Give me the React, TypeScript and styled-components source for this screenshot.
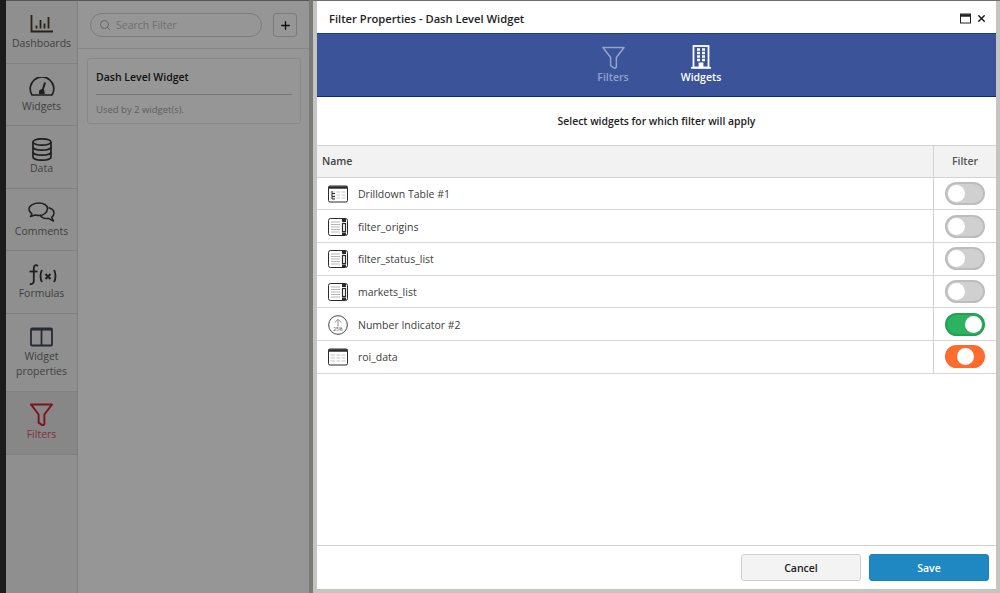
import React from "react";
import styled, { createGlobalStyle } from "styled-components";
import { Search, Plus, X } from "lucide-react";

const GlobalStyle = createGlobalStyle`
  html, body {
    margin: 0;
    padding: 0;
    height: 100%;
    overflow: hidden;
    font-family: "Open Sans", "Noto Sans", sans-serif;
  }
`;

const Page = styled.div`
  width: 1000px;
  height: 593px;
  display: flex;
  background: #969696;
  overflow: hidden;
`;

const EdgeStrip = styled.div`
  width: 6px;
  background: #1c1c1c;
  flex: none;
`;

const Sidebar = styled.nav`
  width: 72px;
  flex: none;
  background: #8f8f8f;
  border-right: 1px solid #7f7f7f;
  box-sizing: border-box;
  border-top: 1px solid #555;
`;

const NavItem = styled.div<{ $active?: boolean; $tall?: boolean }>`
  height: ${(p) => (p.$tall ? 78 : 62.6)}px;
  box-sizing: border-box;
  border-bottom: 1px solid #808080;
  display: flex;
  flex-direction: column;
  align-items: center;
  padding-top: 11px;
  background: ${(p) => (p.$active ? "#878787" : "transparent")};
  color: ${(p) => (p.$active ? "#7d3238" : "#3f3f3f")};
  font-size: 10.5px;
  line-height: 15px;
  text-align: center;
`;

const NavIcon = styled.div`
  height: 24px;
  display: flex;
  align-items: center;
  justify-content: center;
  color: #1f1f1f;
`;

const FilterPanel = styled.section`
  width: 231px;
  flex: none;
  box-sizing: border-box;
  border-top: 1px solid #555;
  background: #969696;
`;

const SearchBar = styled.div`
  height: 48px;
  box-sizing: border-box;
  border-bottom: 1px solid #858585;
  padding: 12px 12px 0 12px;
  display: flex;
  gap: 11px;
`;

const SearchField = styled.div`
  width: 172px;
  flex: none;
  height: 24px;
  box-sizing: border-box;
  border: 1px solid #7c7c7c;
  border-radius: 12px;
  display: flex;
  align-items: center;
  gap: 5px;
  padding-left: 8px;
  color: #6f6f6f;
  font-size: 10.5px;
`;

const AddButton = styled.div`
  width: 24px;
  flex: none;
  height: 24px;
  box-sizing: border-box;
  border: 1px solid #7c7c7c;
  border-radius: 3px;
  display: flex;
  align-items: center;
  justify-content: center;
  color: #111;
`;

const FilterCard = styled.div`
  margin: 9px 8px 8px 9px;
  height: 66px;
  box-sizing: border-box;
  border: 1px solid #888;
  border-radius: 3px;
  padding: 11px 8px 0 8px;
`;

const CardTitle = styled.div`
  font-size: 10.5px;
  font-weight: 600;
  line-height: 15px;
  color: #111;
  padding-bottom: 9px;
  border-bottom: 1px solid #777;
`;

const CardMeta = styled.div`
  font-size: 9.5px;
  line-height: 14px;
  margin-top: 8px;
  color: #5f5f5f;
`;

const ShadowEdge = styled.div`
  width: 4px;
  flex: none;
  background: #7a7a78;
`;

const ModalFrame = styled.div`
  flex: 1;
  box-sizing: border-box;
  background: #c6c4c1;
  border-top: 1px solid #6e6e6e;
  padding: 0 4px 4px 4px;
  display: flex;
`;

const Modal = styled.main`
  flex: 1;
  display: flex;
  flex-direction: column;
  background: #fff;
`;

const ModalHeader = styled.header`
  height: 32px;
  flex: none;
  box-sizing: border-box;
  padding: 2px 9px 0 12px;
  display: flex;
  align-items: center;
  justify-content: space-between;
  font-size: 11.2px;
  font-weight: 600;
  color: #222;
`;

const HeaderActions = styled.div`
  display: flex;
  align-items: center;
  gap: 5px;
  color: #111;
`;

const TabBar = styled.div`
  height: 64px;
  flex: none;
  box-sizing: border-box;
  background: #3a5399;
  border-top: 1px solid #1d3a8c;
  border-bottom: 1px solid #0f2a78;
  display: flex;
  justify-content: center;
  gap: 47px;
  padding-left: 1px;
`;

const Tab = styled.div<{ $active?: boolean }>`
  width: 41px;
  display: flex;
  flex-direction: column;
  align-items: center;
  padding-top: 11px;
  color: ${(p) => (p.$active ? "#fff" : "#93a3cb")};
  font-size: 10.5px;
  font-weight: 600;
  line-height: 14px;
`;

const TabIcon = styled.div`
  height: 24px;
  margin-bottom: 1px;
  display: flex;
  align-items: center;
`;

const Prompt = styled.div`
  height: 48px;
  flex: none;
  display: flex;
  align-items: center;
  justify-content: center;
  font-size: 10.4px;
  font-weight: 600;
  color: #222;
`;

const Table = styled.div`
  flex: 1;
  display: flex;
  flex-direction: column;
`;

const HeadRow = styled.div`
  height: 32.5px;
  flex: none;
  box-sizing: border-box;
  display: grid;
  grid-template-columns: 616px 1fr;
  background: #f2f2f2;
  border-top: 1px solid #d2d2d2;
  border-bottom: 1px solid #d2d2d2;
  font-size: 10.5px;
  font-weight: 600;
  color: #444;
  align-items: center;
`;

const NameHead = styled.div`
  padding-left: 5px;
`;

const FilterHead = styled.div`
  height: 100%;
  display: flex;
  align-items: center;
  justify-content: center;
  border-left: 1px solid #d2d2d2;
  color: #555;
`;

const Row = styled.div`
  height: 32.7px;
  flex: none;
  box-sizing: border-box;
  display: grid;
  grid-template-columns: 616px 1fr;
  border-bottom: 1px solid #d6d6d6;
`;

const NameCell = styled.div`
  display: flex;
  align-items: center;
  padding: 1px 0 0 11px;
  gap: 10px;
  font-size: 10.5px;
  color: #3d3d3d;
`;

const ToggleCell = styled.div`
  display: flex;
  align-items: center;
  justify-content: center;
  border-left: 1px solid #d2d2d2;
`;

const Toggle = styled.div<{ $state: "off" | "on" | "mixed" }>`
  width: 40px;
  height: 23px;
  box-sizing: border-box;
  border-radius: 12px;
  border: 2px solid
    ${(p) =>
      p.$state === "on" ? "#22a054" : p.$state === "mixed" ? "#ff6a2b" : "#bdbdbd"};
  background: ${(p) =>
    p.$state === "on" ? "#2db35f" : p.$state === "mixed" ? "#ff6c2f" : "#d0d0d0"};
  display: flex;
  align-items: center;
  justify-content: ${(p) =>
    p.$state === "on" ? "flex-end" : p.$state === "mixed" ? "center" : "flex-start"};
  padding: 0 1px;
`;

const Knob = styled.div`
  width: 17px;
  height: 17px;
  border-radius: 50%;
  background: #fff;
`;

const ModalFooter = styled.footer`
  height: 44px;
  flex: none;
  box-sizing: border-box;
  border-top: 1px solid #d2d2d2;
  display: flex;
  justify-content: flex-end;
  align-items: flex-start;
  gap: 8px;
  padding: 8px 7px 0 0;
`;

const Button = styled.button<{ $primary?: boolean }>`
  width: 120px;
  height: 27px;
  box-sizing: border-box;
  border-radius: 3px;
  border: 1px solid ${(p) => (p.$primary ? "#1b82ba" : "#cfcfcf")};
  background: ${(p) => (p.$primary ? "#1f88c2" : "#f3f3f3")};
  color: ${(p) => (p.$primary ? "#fff" : "#222")};
  font-family: inherit;
  font-size: 10.5px;
  font-weight: 600;
  padding: 0;
`;

const BarsIcon = () => (
  <svg width="23" height="18" viewBox="0 0 23 18" fill="none" stroke="#2a2118" strokeWidth="1.8">
    <path d="M1.5 0v16.500H23" />
    <path d="M6.500 13.500v-3M10.500 13.500V5M14.500 13.500V8.500M18.500 13.500V2" />
  </svg>
);

const GaugeIcon = () => (
  <svg width="26" height="19" viewBox="0 0 26 19" fill="none" stroke="#1f1f1f" strokeWidth="1.700">
    <path d="M3 18A11.800 11.800 0 1 1 23 18Z" strokeLinejoin="round" />
    <path d="M16 5.500l-2.500 8" strokeWidth="2" />
    <path d="M10 17v-2a2.800 2.800 0 0 1 5.600 0v2z" fill="#1f1f1f" stroke="none" />
  </svg>
);

const DatabaseIcon = () => (
  <svg width="20" height="23" viewBox="0 0 20 23" fill="none" stroke="#1f1f1f" strokeWidth="1.700">
    <ellipse cx="10" cy="4" rx="9" ry="3.200" />
    <path d="M1 4v15c0 1.800 4 3.200 9 3.200s9-1.400 9-3.200V4" />
    <path d="M1 9c0 1.800 4 3.200 9 3.200s9-1.400 9-3.200" />
    <path d="M1 14c0 1.800 4 3.200 9 3.200s9-1.400 9-3.200" />
  </svg>
);

const CommentsIcon = () => (
  <svg width="27" height="20" viewBox="0 0 27 20" fill="none" stroke="#1f1f1f" strokeWidth="1.500" strokeLinejoin="round">
    <path d="M19.500 6.500C19.500 3.200 15.500 1 11 1S1 3.200 1 7c0 2 1.200 3.700 3 4.800L2.500 14.500 7.200 13c1.200.3 2.500.500 3.800.500 4.500 0 8.500-3 8.500-7z" />
    <path d="M20.500 5.500c3 1 5.500 3 5.500 5.500 0 1.700-1 3.200-2.300 4.200l1.800 3.800-5-2.600c-3.500.400-7-.6-8.500-3.400" />
  </svg>
);

const FormulaIcon = () => (
  <svg width="30" height="21" viewBox="0 0 30 21" fill="none" stroke="#1f1f1f" strokeWidth="1.800">
    <path d="M11 2C9 .5 6.800 1 6.800 4v13c0 2.500-2 3.500-4 2.800" />
    <path d="M2.500 7.500h8" />
    <path d="M15 6c-2 3-2 9 0 12M27 6c2 3 2 9 0 12" />
    <path d="M18.500 10l5 5M23.500 10l-5 5" strokeWidth="1.900" />
  </svg>
);

const PanelsIcon = () => (
  <svg width="23" height="20" viewBox="0 0 23 20" fill="none" stroke="#262b33" strokeWidth="1.800">
    <rect x="1" y="1.500" width="21" height="17" rx="1" />
    <path d="M11.500 2v16" />
    <path d="M1 2.300h21" strokeWidth="2.500" />
  </svg>
);

const FunnelIcon = ({ size, color, width = 1.6 }: { size: number; color: string; width?: number }) => (
  <svg width={size} height={size} viewBox="0 0 24 24" fill="none" stroke={color} strokeWidth={width} strokeLinejoin="round">
    <path d="M1 1.500h22l-8 10.500v9.500c0 1.500-1.500 2-2.600 1.300L9 20.500v-8.500z" />
  </svg>
);

const BuildingIcon = () => (
  <svg width="20" height="24" viewBox="0 0 20 24" fill="none" stroke="#fff" strokeWidth="1.800">
    <rect x="2.500" y="1" width="15" height="21.500" />
    <path d="M0 22.800h20" />
    <path d="M6 4.500h3M11 4.500h3M6 8h3M11 8h3M6 11.500h3M11 11.500h3M6 15h3M11 15h3" strokeWidth="2.400" />
    <path d="M8.500 22v-3.500h3V22" fill="#fff" />
  </svg>
);

const MaximizeIcon = () => (
  <svg width="11" height="11" viewBox="0 0 11 11" fill="none" stroke="#222" strokeWidth="1">
    <rect x=".5" y="1" width="10" height="9" />
    <path d="M.5 2.500h10" strokeWidth="2.500" />
  </svg>
);

const TableIcon = ({ tree }: { tree?: boolean }) => (
  <svg width="20" height="18" viewBox="0 0 20 18" fill="none" stroke="#2b2b2b" strokeWidth="1">
    <rect x=".5" y="1" width="19" height="16" rx="1.500" />
    <path d="M.5 2.500h19" strokeWidth="2.500" />
    <g stroke="#c4c4c4">
      <path d="M2.500 7h4.500M8.500 7h3.500M13.500 7h4M2.500 10h4.500M8.500 10h3.500M13.500 10h4M2.500 13h4.500M8.500 13h3.500M13.500 13h4" />
    </g>
    {tree && <path d="M4 6v8M4 8.500h3M4 11.500h3M4 14h3" stroke="#333" strokeWidth="1" />}
  </svg>
);

const ListIcon = () => (
  <svg width="20" height="18" viewBox="0 0 20 18" fill="none" stroke="#2b2b2b" strokeWidth="1">
    <rect x=".5" y=".5" width="19" height="17" rx="2" />
    <path d="M3 4h9M3 6.500h9M3 9h9M3 11.500h9M3 14h9" stroke="#b5b5b5" />
    <rect x="14" y="1" width="4" height="3" fill="#2b2b2b" stroke="none" />
    <rect x="14.500" y="5.500" width="3" height="8" fill="#fff" strokeWidth="1.200" />
    <rect x="14" y="14.500" width="4" height="2.500" fill="#2b2b2b" stroke="none" />
  </svg>
);

const IndicatorIcon = () => (
  <svg width="20" height="20" viewBox="0 0 21 21" fill="none" stroke="#3a3a3a" strokeWidth="1">
    <circle cx="10.500" cy="10.500" r="9.800" />
    <path d="M10.500 12V5M7 8l3.500-3.500L14 8" stroke="#8a8a8a" />
    <text x="10.500" y="16.500" fontSize="5" textAnchor="middle" fill="#444" stroke="none" fontFamily="Open Sans, sans-serif">25%</text>
  </svg>
);

const widgets = [
  { name: "Drilldown Table #1", icon: <TableIcon tree />, state: "off" as const },
  { name: "filter_origins", icon: <ListIcon />, state: "off" as const },
  { name: "filter_status_list", icon: <ListIcon />, state: "off" as const },
  { name: "markets_list", icon: <ListIcon />, state: "off" as const },
  { name: "Number Indicator #2", icon: <IndicatorIcon />, state: "on" as const },
  { name: "roi_data", icon: <TableIcon />, state: "mixed" as const },
];

export default function App() {
  return (
    <>
      <GlobalStyle />
      <Page>
        <EdgeStrip />
        <Sidebar>
          <NavItem>
            <NavIcon><BarsIcon /></NavIcon>
            Dashboards
          </NavItem>
          <NavItem>
            <NavIcon><GaugeIcon /></NavIcon>
            Widgets
          </NavItem>
          <NavItem>
            <NavIcon><DatabaseIcon /></NavIcon>
            Data
          </NavItem>
          <NavItem>
            <NavIcon><CommentsIcon /></NavIcon>
            Comments
          </NavItem>
          <NavItem>
            <NavIcon><FormulaIcon /></NavIcon>
            Formulas
          </NavItem>
          <NavItem $tall>
            <NavIcon><PanelsIcon /></NavIcon>
            Widget
            <br />
            properties
          </NavItem>
          <NavItem $active>
            <NavIcon><FunnelIcon size={23} color="#7d1220" width={2} /></NavIcon>
            Filters
          </NavItem>
        </Sidebar>
        <FilterPanel>
          <SearchBar>
            <SearchField>
              <Search size={12} color="#666" />
              Search Filter
            </SearchField>
            <AddButton><Plus size={13} strokeWidth={2.5} /></AddButton>
          </SearchBar>
          <FilterCard>
            <CardTitle>Dash Level Widget</CardTitle>
            <CardMeta>Used by 2 widget(s).</CardMeta>
          </FilterCard>
        </FilterPanel>
        <ShadowEdge />
        <ModalFrame>
          <Modal>
            <ModalHeader>
              Filter Properties - Dash Level Widget
              <HeaderActions>
                <MaximizeIcon />
                <X size={11} strokeWidth={3} />
              </HeaderActions>
            </ModalHeader>
            <TabBar>
              <Tab>
                <TabIcon><FunnelIcon size={23} color="#93a3cb" /></TabIcon>
                Filters
              </Tab>
              <Tab $active>
                <TabIcon><BuildingIcon /></TabIcon>
                Widgets
              </Tab>
            </TabBar>
            <Prompt>Select widgets for which filter will apply</Prompt>
            <Table>
              <HeadRow>
                <NameHead>Name</NameHead>
                <FilterHead>Filter</FilterHead>
              </HeadRow>
              {widgets.map((w) => (
                <Row key={w.name}>
                  <NameCell>
                    {w.icon}
                    {w.name}
                  </NameCell>
                  <ToggleCell>
                    <Toggle $state={w.state}><Knob /></Toggle>
                  </ToggleCell>
                </Row>
              ))}
            </Table>
            <ModalFooter>
              <Button>Cancel</Button>
              <Button $primary>Save</Button>
            </ModalFooter>
          </Modal>
        </ModalFrame>
      </Page>
    </>
  );
}
